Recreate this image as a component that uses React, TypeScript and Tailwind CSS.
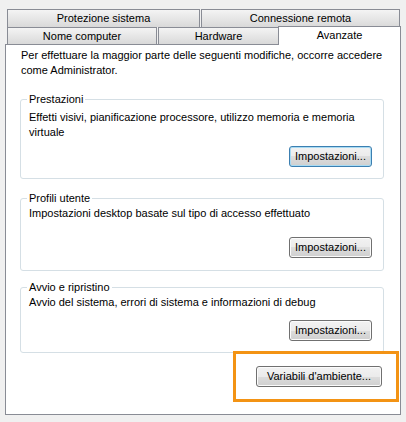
import React from "react";

const tabBase =
  "flex items-center justify-center border-t border-l border-r border-[#898c95] bg-linear-to-b from-[#f4f4f4] to-[#d9d9d9] text-black";

const Button = ({ label, width, focused }: { label: string; width: string; focused?: boolean }) => (
  <button
    className={`${width} h-[21px] rounded-[3px] border text-[11px] leading-none text-black bg-[linear-gradient(#f2f2f2_0%,#ebebeb_50%,#dddddd_50%,#cfcfcf_100%)] ${
      focused
        ? "border-[#3c7fb1] shadow-[inset_0_0_0_1px_#a8dbf3]"
        : "border-[#707070] shadow-[inset_0_0_0_1px_#fbfbfb]"
    }`}
  >
    {label}
  </button>
);

const Group = ({
  title,
  children,
  className,
}: {
  title: string;
  children: React.ReactNode;
  className?: string;
}) => (
  <fieldset className={`border border-[#d5dfe5] rounded-[3px] pl-[8px] pr-[11px] ${className ?? ""}`}>
    <legend className="px-[2px] -ml-[2px] leading-[15px]">{title}</legend>
    {children}
  </fieldset>
);

const App = () => {
  return (
    <div className="relative w-[406px] h-[422px] bg-[#f0f0f0] pt-[9px] pl-[5px] font-['Liberation_Sans',Arial,sans-serif] text-[11px] text-black">
      <div className="pl-[2px]">
        <div className="flex h-[18px]">
          <div className={`${tabBase} w-[193px] pb-[1px]`}>Protezione sistema</div>
          <div className={`${tabBase} w-[199px] ml-[1px] pb-[1px]`}>Connessione remota</div>
        </div>
        <div className="flex items-start h-[17px]">
          <div className={`${tabBase} w-[150px] h-[17px] pt-[1px]`}>Nome computer</div>
          <div className={`${tabBase} w-[121px] h-[17px] ml-[1px] pt-[1px]`}>Hardware</div>
          <div className="relative z-10 -mt-[1px] -ml-[1px] w-[123px] h-[19px] flex items-center justify-center border-t border-l border-r border-[#898c95] bg-white pb-[2px]">
            Avanzate
          </div>
        </div>
      </div>

      <div className="w-[396px] h-[371px] border border-[#898c95] bg-white pl-[14px] pr-[16px]">
        <p className="pt-[3px] pl-[1px] leading-[15px]">
          Per effettuare la maggior parte delle seguenti modifiche, occorre accedere
          <br />
          come Administrator.
        </p>

        <Group title="Prestazioni" className="mt-[14px] pb-[11px]">
          <p className="pt-[3px] leading-[15px]">
            Effetti visivi, pianificazione processore, utilizzo memoria e memoria
            <br />
            virtuale
          </p>
          <div className="flex justify-end mt-[6px]">
            <Button label="Impostazioni..." width="w-[83px]" focused />
          </div>
        </Group>

        <Group title="Profili utente" className="mt-[12px] pb-[12px]">
          <p className="leading-[15px]">Impostazioni desktop basate sul tipo di accesso effettuato</p>
          <div className="flex justify-end mt-[16px]">
            <Button label="Impostazioni..." width="w-[83px]" />
          </div>
        </Group>

        <Group title="Avvio e ripristino" className="mt-[9px] pb-[11px]">
          <p className="leading-[15px]">Avvio del sistema, errori di sistema e informazioni di debug</p>
          <div className="flex justify-end mt-[10px]">
            <Button label="Impostazioni..." width="w-[83px]" />
          </div>
        </Group>

        <div className="flex justify-end mt-[13px] pr-[2px]">
          <Button label="Variabili d'ambiente..." width="w-[126px]" />
        </div>
      </div>

      {/* highlight annotation */}
      <div className="absolute left-[233px] top-[351px] w-[166px] h-[51px] border-[3px] border-[#f39314]" />
    </div>
  );
};

export default App;
